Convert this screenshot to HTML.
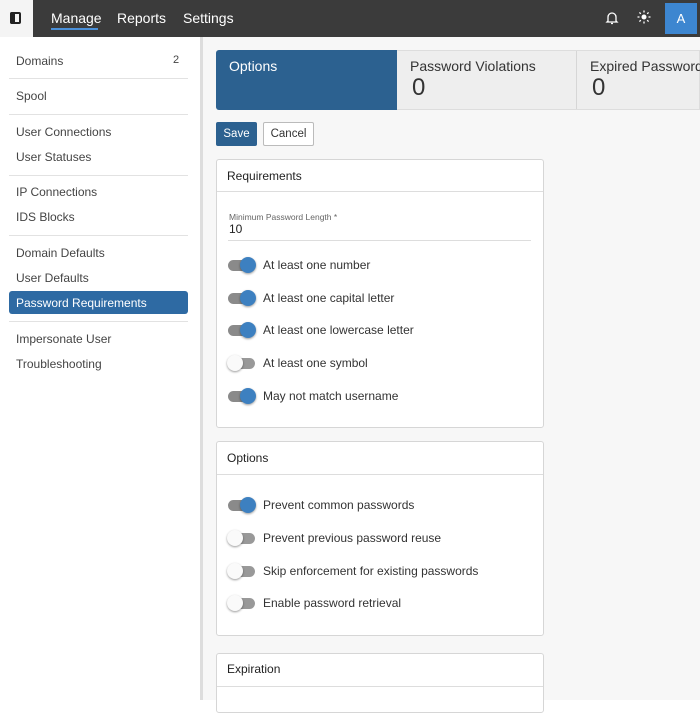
<!DOCTYPE html>
<html><head><style>
*{box-sizing:border-box;margin:0;padding:0}
body{width:700px;height:700px;overflow:hidden;background:#fff;font-family:"Liberation Sans",sans-serif;color:#333;position:relative}
.a{position:absolute}
.top{left:0;top:0;width:700px;height:37px;background:#3b3b3b}
.sq{left:0;top:0;width:33px;height:37px;background:#f4f4f4}
.nav{color:#fff;font-size:14px;top:10px}
.side{left:0;top:37px;width:200px;height:663px;background:#fff}
.vb{left:200px;top:37px;width:3px;height:663px;background:#ddd}
.main{left:203px;top:37px;width:497px;height:663px;background:#f7f7f7}
.si{left:16px;font-size:12px;color:#444}
.sep{left:9px;width:179px;height:1px;background:#e2e2e2}
.card{background:#fff;border:1px solid #d6d6d6;border-radius:3px}
.ch{font-size:12px;color:#222}
.tg{left:227px;width:30px;height:16px}
.tg .t{position:absolute;left:1px;top:3px;width:27px;height:11px;border-radius:6px;background:#8a8a8a}
.tg .k{position:absolute;top:0;width:16px;height:16px;border-radius:50%;box-shadow:0 1px 2px rgba(0,0,0,.4)}
.on .k{left:13px;background:#3d80c0}
.off .k{left:0;background:#fafafa}
.off .t{background:#999}
.tl{left:263px;font-size:12px;color:#333}
</style></head><body>
<div class="a top"></div>
<div class="a sq"><div class="a" style="left:10px;top:12px;width:11px;height:12px;border:2px solid #222;border-radius:2px"></div><div class="a" style="left:10px;top:12px;width:5px;height:12px;background:#222;border-radius:2px 0 0 2px"></div></div>
<div class="a nav" style="left:51px">Manage</div>
<div class="a" style="left:51px;top:28px;width:47px;height:2px;background:#4a90d9"></div>
<div class="a nav" style="left:117px">Reports</div>
<div class="a nav" style="left:183px">Settings</div>
<svg class="a" style="left:604px;top:10px" width="16" height="16" viewBox="0 0 16 16"><path d="M4 11V7a4 4 0 0 1 8 0v4l1 1H3z M7 13.5h2" fill="none" stroke="#fff" stroke-width="1.3"/></svg>
<svg class="a" style="left:637px;top:10px" width="14" height="14" viewBox="0 0 14 14"><circle cx="7" cy="7" r="2.5" fill="#fff"/><g stroke="#fff" stroke-width="1.3"><path d="M7 0.5v2M7 11.5v2M0.5 7h2M11.5 7h2M2.4 2.4l1.4 1.4M10.2 10.2l1.4 1.4M2.4 11.6l1.4-1.4M10.2 3.8l1.4-1.4"/></g></svg>
<div class="a" style="left:665px;top:3px;width:32px;height:31px;background:#3d86d0;color:#fff;font-size:13px;text-align:center;line-height:31px">A</div>

<div class="a side"></div>
<div class="a vb"></div>
<div class="a main"></div>

<div class="a si" style="top:54px">Domains</div><div class="a si" style="left:173px;top:54px;font-size:11px">2</div>
<div class="a sep" style="top:78px"></div>
<div class="a si" style="top:89px">Spool</div>
<div class="a sep" style="top:114px"></div>
<div class="a si" style="top:125px">User Connections</div>
<div class="a si" style="top:150px">User Statuses</div>
<div class="a sep" style="top:175px"></div>
<div class="a si" style="top:185px">IP Connections</div>
<div class="a si" style="top:210px">IDS Blocks</div>
<div class="a sep" style="top:235px"></div>
<div class="a si" style="top:246px">Domain Defaults</div>
<div class="a si" style="top:271px">User Defaults</div>
<div class="a" style="left:9px;top:291px;width:179px;height:23px;background:#2e6aa3;border-radius:3px"></div>
<div class="a si" style="top:296px;color:#fff">Password Requirements</div>
<div class="a sep" style="top:321px"></div>
<div class="a si" style="top:332px">Impersonate User</div>
<div class="a si" style="top:357px">Troubleshooting</div>

<div class="a" style="left:216px;top:50px;width:484px;height:60px;background:#eee;border:1px solid #ddd;border-radius:3px 0 0 3px"></div>
<div class="a" style="left:216px;top:50px;width:181px;height:60px;background:#2c6190;border-radius:3px 0 0 3px"></div>
<div class="a" style="left:229px;top:58px;color:#fff;font-size:14px">Options</div>
<div class="a" style="left:576px;top:51px;width:1px;height:58px;background:#d6d6d6"></div>
<div class="a" style="left:410px;top:58px;font-size:14px;color:#333">Password Violations</div>
<div class="a" style="left:412px;top:74px;font-size:24px;color:#333">0</div>
<div class="a" style="left:590px;top:58px;font-size:14px;color:#333;white-space:nowrap">Expired Passwords</div>
<div class="a" style="left:592px;top:74px;font-size:24px;color:#333">0</div>

<div class="a" style="left:216px;top:122px;width:41px;height:24px;background:#2c6190;border-radius:2px;color:#fff;font-size:11.5px;text-align:center;line-height:24px">Save</div>
<div class="a" style="left:263px;top:122px;width:51px;height:24px;background:#fff;border:1px solid #bbb;border-radius:2px;color:#333;font-size:11.5px;text-align:center;line-height:22px">Cancel</div>

<div class="a card" style="left:216px;top:159px;width:328px;height:269px"></div>
<div class="a" style="left:217px;top:191px;width:326px;height:1px;background:#ddd"></div>
<div class="a ch" style="left:227px;top:169px">Requirements</div>
<div class="a" style="left:229px;top:212px;font-size:8.5px;color:#666">Minimum Password Length *</div>
<div class="a" style="left:229px;top:222px;font-size:12px;color:#222">10</div>
<div class="a" style="left:228px;top:240px;width:303px;height:1px;background:#ddd"></div>
<div class="a tg on" style="top:257px"><div class="t"></div><div class="k"></div></div><div class="a tl" style="top:258px">At least one number</div>
<div class="a tg on" style="top:290px"><div class="t"></div><div class="k"></div></div><div class="a tl" style="top:291px">At least one capital letter</div>
<div class="a tg on" style="top:322px"><div class="t"></div><div class="k"></div></div><div class="a tl" style="top:323px">At least one lowercase letter</div>
<div class="a tg off" style="top:355px"><div class="t"></div><div class="k"></div></div><div class="a tl" style="top:356px">At least one symbol</div>
<div class="a tg on" style="top:388px"><div class="t"></div><div class="k"></div></div><div class="a tl" style="top:389px">May not match username</div>

<div class="a card" style="left:216px;top:441px;width:328px;height:195px"></div>
<div class="a" style="left:217px;top:474px;width:326px;height:1px;background:#ddd"></div>
<div class="a ch" style="left:227px;top:451px">Options</div>
<div class="a tg on" style="top:497px"><div class="t"></div><div class="k"></div></div><div class="a tl" style="top:498px">Prevent common passwords</div>
<div class="a tg off" style="top:530px"><div class="t"></div><div class="k"></div></div><div class="a tl" style="top:531px">Prevent previous password reuse</div>
<div class="a tg off" style="top:563px"><div class="t"></div><div class="k"></div></div><div class="a tl" style="top:564px">Skip enforcement for existing passwords</div>
<div class="a tg off" style="top:595px"><div class="t"></div><div class="k"></div></div><div class="a tl" style="top:596px">Enable password retrieval</div>

<div class="a card" style="left:216px;top:653px;width:328px;height:60px"></div>
<div class="a" style="left:217px;top:686px;width:326px;height:1px;background:#ddd"></div>
<div class="a ch" style="left:227px;top:662px">Expiration</div>
</body></html>
